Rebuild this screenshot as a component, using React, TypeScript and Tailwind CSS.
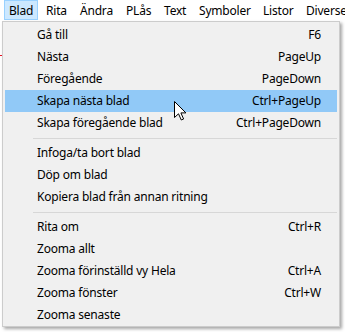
import React from "react";

type Item = { label: string; shortcut?: string; active?: boolean } | "sep";

const menus = [
  { label: "Blad", w: "w-[34px]", pl: "pl-[4px]", open: true },
  { label: "Rita", w: "w-[34px]", pl: "pl-[7px]" },
  { label: "Ändra", w: "w-[46px]", pl: "pl-[7px]" },
  { label: "PLås", w: "w-[38px]", pl: "pl-[7px]" },
  { label: "Text", w: "w-[35px]", pl: "pl-[7px]" },
  { label: "Symboler", w: "w-[64px]", pl: "pl-[7px]" },
  { label: "Listor", w: "w-[43px]", pl: "pl-[7px]" },
  { label: "Diverse", w: "w-[60px]", pl: "pl-[7px]" },
];

const items: Item[] = [
  { label: "Gå till", shortcut: "F6" },
  { label: "Nästa", shortcut: "PageUp" },
  { label: "Föregående", shortcut: "PageDown" },
  { label: "Skapa nästa blad", shortcut: "Ctrl+PageUp", active: true },
  { label: "Skapa föregående blad", shortcut: "Ctrl+PageDown" },
  "sep",
  { label: "Infoga/ta bort blad" },
  { label: "Döp om blad" },
  { label: "Kopiera blad från annan ritning" },
  "sep",
  { label: "Rita om", shortcut: "Ctrl+R" },
  { label: "Zooma allt" },
  { label: "Zooma förinställd vy Hela", shortcut: "Ctrl+A" },
  { label: "Zooma fönster", shortcut: "Ctrl+W" },
  { label: "Zooma senaste" },
];

const Cursor = () => (
  <svg
    className="absolute left-[174px] top-[101px]"
    width="13"
    height="20"
    viewBox="0 0 13 20"
  >
    <path
      d="M0.5 0.5 L0.5 16.5 L4.5 12.8 L7.3 19 L9.6 18 L6.9 11.9 L11.9 11.9 Z"
      fill="#fff"
      stroke="#000"
      strokeWidth="1"
      strokeLinejoin="miter"
    />
  </svg>
);

export default function App() {
  return (
    <div className="relative w-[345px] h-[332px] overflow-hidden bg-white font-['Noto_Sans',sans-serif] text-[12px] tracking-[-0.2px] text-black">
      {/* menu bar */}
      <div className="flex h-[21px] items-start pl-[4px] overflow-hidden whitespace-nowrap">
        {menus.map((m) => (
          <div
            key={m.label}
            className={`${m.w} ${m.pl} shrink-0 h-[20px] leading-[20px] border ${
              m.open ? "bg-[#cce8ff] border-[#99d1ff]" : "border-transparent"
            }`}
          >
            {m.label}
          </div>
        ))}
      </div>

      <div className="flex">
        <div className="w-[2px] shrink-0">
          <div className="mt-[34px] h-[1px] w-[2px] bg-[#e81123]" />
        </div>
        {/* dropdown */}
        <div className="w-[338px] h-[306px] border border-[#cccccc] bg-[#f0f0f0] p-[2px] shadow-[2px_2px_3px_rgba(0,0,0,0.35)]">
          {items.map((it, i) =>
            it === "sep" ? (
              <div key={i} className="h-[8px] flex items-center pl-[28px]">
                <div className="h-[1px] w-full bg-[#d7d7d7]" />
              </div>
            ) : (
              <div
                key={i}
                className={`flex h-[22px] items-center justify-between pl-[32px] pr-[16px] ${
                  it.active ? "bg-[#91c9f7]" : ""
                }`}
              >
                <span>{it.label}</span>
                {it.shortcut && <span>{it.shortcut}</span>}
              </div>
            )
          )}
        </div>
      </div>
      <Cursor />
    </div>
  );
}
